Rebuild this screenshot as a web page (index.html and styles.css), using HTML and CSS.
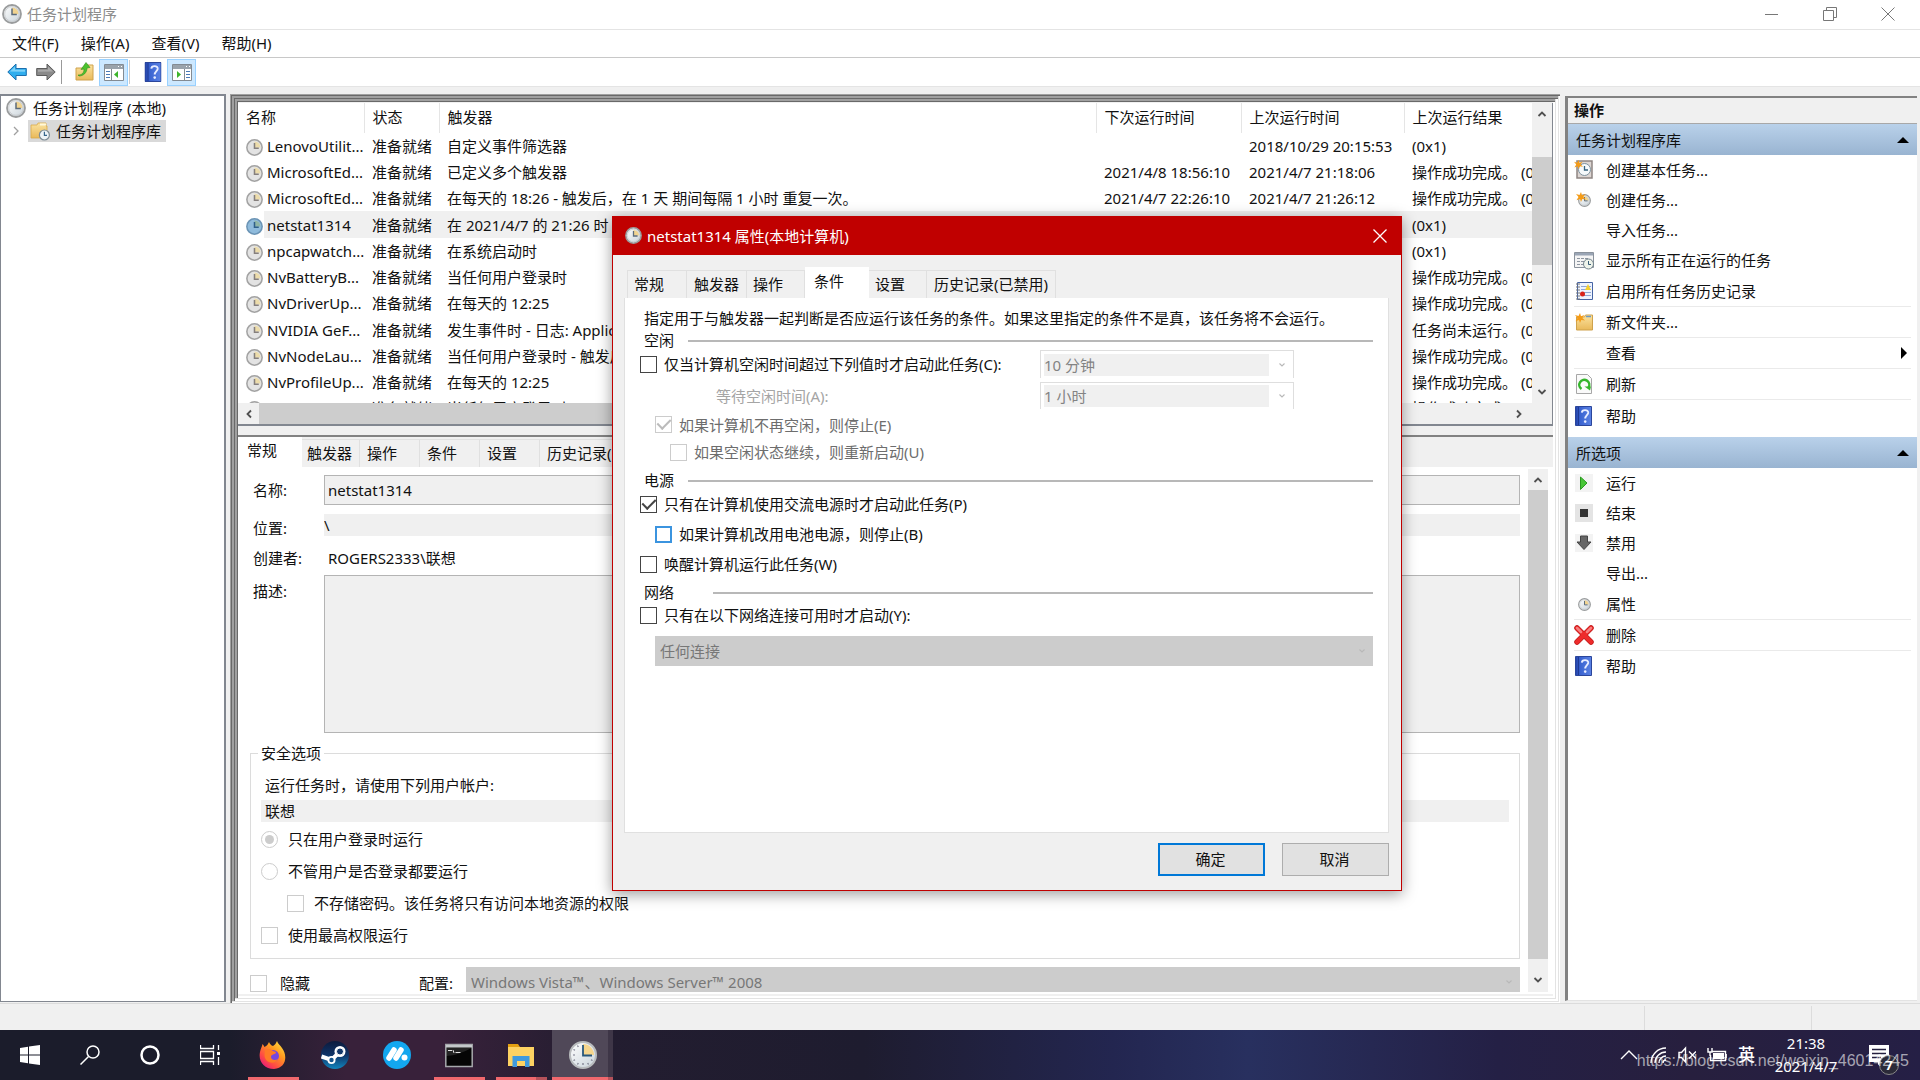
FILE: index.html
```html
<!DOCTYPE html>
<html lang="zh-CN">
<head>
<meta charset="utf-8">
<title>任务计划程序</title>
<link rel="stylesheet" href="styles.css">
</head>
<body>
<svg class="defs" aria-hidden="true">
  <defs>
    <linearGradient id="gFace" x1="0" y1="0" x2="1" y2="1"><stop offset="0" stop-color="#fff"/><stop offset="1" stop-color="#c9d3da"/></linearGradient>
    <linearGradient id="gFolder" x1="0" y1="0" x2="0" y2="1"><stop offset="0" stop-color="#fbe3a0"/><stop offset="1" stop-color="#e9b95a"/></linearGradient>
    <linearGradient id="gBlue" x1="0" y1="0" x2="1" y2="0"><stop offset="0" stop-color="#2342a8"/><stop offset=".3" stop-color="#3a63d0"/><stop offset="1" stop-color="#5b82e4"/></linearGradient>
    <linearGradient id="gFox" x1="1" y1="0" x2="0.2" y2="1"><stop offset="0" stop-color="#fff14a"/><stop offset=".4" stop-color="#ff9a1f"/><stop offset=".75" stop-color="#ff4a45"/><stop offset="1" stop-color="#e5187f"/></linearGradient>
    <linearGradient id="gSteam" x1="0" y1="0" x2="0" y2="1"><stop offset="0" stop-color="#0c1a3c"/><stop offset=".5" stop-color="#0f3468"/><stop offset="1" stop-color="#1285bd"/></linearGradient>
    <symbol id="clock" viewBox="0 0 20 20">
      <circle cx="10" cy="10" r="9" fill="url(#gFace)" stroke="#9a9c9d" stroke-width="1.8"/>
      <path d="M10 10V3.4A6.6 6.6 0 0 1 16.6 10z" fill="#f0d390"/>
      <circle cx="10" cy="10" r="7.3" fill="none" stroke="#c4c7c9" stroke-width=".8"/>
      <path d="M10 4.6V10.6H14.8" fill="none" stroke="#5c6b7a" stroke-width="1.5"/>
    </symbol>
    <symbol id="clock-grey" viewBox="0 0 20 20">
      <circle cx="10" cy="10" r="9" fill="#e3e3e3" stroke="#a3a3a3" stroke-width="1.8"/>
      <path d="M10 10V3A7 7 0 0 1 17 10z" fill="#ecdcab"/>
      <path d="M10 4.6V11H15" fill="none" stroke="#857f7c" stroke-width="1.8"/>
    </symbol>
    <symbol id="clock-blue" viewBox="0 0 20 20">
      <circle cx="10" cy="10" r="9" fill="#8fbbdc" stroke="#6b94b5" stroke-width="1.8"/>
      <path d="M10 10V3A7 7 0 0 1 17 10z" fill="#8fb5a6"/>
      <path d="M10 4.6V11H15" fill="none" stroke="#2f6088" stroke-width="1.8"/>
    </symbol>
    <symbol id="folder-clock" viewBox="0 0 20 20">
      <path d="M1 4h6l1-2h8v3h1v12H1z" fill="url(#gFolder)" stroke="#d9a94a" stroke-width=".8"/>
      <path d="M10 2.5h6v2h-6z" fill="#fff8dc"/>
      <circle cx="14.4" cy="14" r="5" fill="#eef4f8" stroke="#7d8c96" stroke-width="1.2"/>
      <path d="M14.4 10.8V14.4H17" fill="none" stroke="#37668c" stroke-width="1.2"/>
    </symbol>
    <symbol id="help" viewBox="0 0 17 20">
      <path d="M.5.5h16v19H.5z" fill="url(#gBlue)" stroke="#2b469b"/>
      <path d="M3.5 1v18" stroke="#1f3a94"/>
      <path d="M6.8 6.6C7 3.2 13.4 3.200 13.200 6.900 13 9 10.200 9.400 10.200 12.600" fill="none" stroke="#e8edff" stroke-width="1.9"/>
      <circle cx="10.200" cy="15.600" r="1.300" fill="#e8edff"/>
    </symbol>
    <symbol id="star" viewBox="0 0 10 10"><path d="M5 0l1 3.200L9.500 2 7.300 5 10 7.500 6.300 7 5 10 4 7 .5 8.200 2.500 5 0 2l3.500 1z" fill="#f49b17"/></symbol>
    <symbol id="up" viewBox="0 0 10 10"><path d="M1.500 7L5 3.500 8.500 7" fill="none" stroke="#505050" stroke-width="1.8"/></symbol>
    <symbol id="down" viewBox="0 0 10 10"><path d="M1.500 3L5 6.500 8.500 3" fill="none" stroke="#505050" stroke-width="1.8"/></symbol>
    <symbol id="left" viewBox="0 0 10 10"><path d="M7 1.500L3.500 5 7 8.500" fill="none" stroke="#505050" stroke-width="1.8"/></symbol>
    <symbol id="right" viewBox="0 0 10 10"><path d="M3 1.500L6.500 5 3 8.500" fill="none" stroke="#505050" stroke-width="1.8"/></symbol>
    <symbol id="drop" viewBox="0 0 10 10"><path d="M2.500 3.500L5 6 7.500 3.500" fill="none" stroke="#b8b8b8" stroke-width="1.100"/></symbol>
  </defs>
</svg>

<header class="titlebar">
  <svg class="i20"><use href="#clock"/></svg>
  <h1>任务计划程序</h1>
  <div class="winbtns">
    <button aria-label="最小化"><svg viewBox="0 0 14 14"><path d="M0 7.500h13"/></svg></button>
    <button aria-label="还原"><svg viewBox="0 0 14 14"><path d="M.5 3.500h10v10H.5zM3.500 3.500v-3h10v10h-3"/></svg></button>
    <button aria-label="关闭"><svg viewBox="0 0 14 14"><path d="M.5.5l13 13M13.500.5l-13 13"/></svg></button>
  </div>
</header>

<nav class="menubar">
  <button>文件(F)</button><button>操作(A)</button><button>查看(V)</button><button>帮助(H)</button>
</nav>

<div class="toolbar">
  <button aria-label="后退"><svg viewBox="0 0 20 18"><path d="M.8 9L9 1v4.500h10.300v7H9V17z" fill="#30aeee" stroke="#1c6fae"/><path d="M3 8.500L8 3.700v3h10v2z" fill="#7fd2f8"/></svg></button>
  <button aria-label="前进"><svg viewBox="0 0 20 18"><path d="M19.200 9L11 1v4.500H.7v7H11V17z" fill="#8a8a8a" stroke="#5c5c5c"/><path d="M17 8.500L12 3.700v3H2v2z" fill="#aaa"/></svg></button>
  <i class="tsep"></i>
  <button aria-label="上移一级"><svg viewBox="0 0 20 18"><path d="M1 5h7l2-3h8v15H1z" fill="url(#gFolder)" stroke="#cfa24c"/><path d="M3 12c4 0 6-2 6-6L6 6.500 11-.5l4 5-3 .5c0 5-4 8-8 8z" fill="#4cc22e" stroke="#2f8e1c" stroke-width=".6"/></svg></button>
  <button class="on" aria-label="显示控制台树"><svg viewBox="0 0 20 18"><path d="M.5 1.500h19v16H.5z" fill="#fff" stroke="#838b93"/><path d="M1 2h18v4H1z" fill="#9aa3ab"/><path d="M14 3.500h1M17 3.500h1" stroke="#fff"/><path d="M7.500 6v11" stroke="#838b93"/><path d="M2 8.500h4M2 11.500h4M2 14.500h4" stroke="#4a7ab8"/><path d="M14 8v7l-4-3.500z" fill="#3db52b"/></svg></button>
  <i class="tsep light"></i>
  <button aria-label="帮助"><svg viewBox="0 0 17 20"><use href="#help"/></svg></button>
  <button class="on" aria-label="显示操作窗格"><svg viewBox="0 0 20 18"><path d="M.5 1.500h19v16H.5z" fill="#fff" stroke="#838b93"/><path d="M1 2h18v4H1z" fill="#9aa3ab"/><path d="M14 3.500h1M17 3.500h1" stroke="#fff"/><path d="M12.500 6v11" stroke="#838b93"/><path d="M14 8.500h4M14 11.500h4M14 14.500h4" stroke="#4a7ab8"/><path d="M5 8v7l4-3.500z" fill="#3db52b"/></svg></button>
</div>

<main class="workspace">
  <aside class="tree">
    <div class="node"><svg class="i20"><use href="#clock"/></svg><span>任务计划程序 (本地)</span></div>
    <div class="node child"><svg class="twisty" viewBox="0 0 10 10"><path d="M3 1l4 4-4 4" fill="none" stroke="#a0a0a0" stroke-width="1.300"/></svg><span class="picked"><svg class="i20"><use href="#folder-clock"/></svg>任务计划程序库</span></div>
  </aside>

  <section class="center">
    <div class="listbox">
      <div class="listbody">
        <div class="tablewrap">
          <table>
            <colgroup><col class="c1"><col class="c2"><col><col class="c4"><col class="c5"><col class="c6"></colgroup>
            <thead><tr><th>名称</th><th>状态</th><th>触发器</th><th>下次运行时间</th><th>上次运行时间</th><th>上次运行结果</th></tr></thead>
            <tbody>
              <tr><td><svg class="i17"><use href="#clock-grey"/></svg>LenovoUtilit...</td><td>准备就绪</td><td>自定义事件筛选器</td><td></td><td>2018/10/29 20:15:53</td><td>(0x1)</td></tr>
              <tr><td><svg class="i17"><use href="#clock-grey"/></svg>MicrosoftEd...</td><td>准备就绪</td><td>已定义多个触发器</td><td>2021/4/8 18:56:10</td><td>2021/4/7 21:18:06</td><td>操作成功完成。 (0x0)</td></tr>
              <tr><td><svg class="i17"><use href="#clock-grey"/></svg>MicrosoftEd...</td><td>准备就绪</td><td>在每天的 18:26 - 触发后，在 1 天 期间每隔 1 小时 重复一次。</td><td>2021/4/7 22:26:10</td><td>2021/4/7 21:26:12</td><td>操作成功完成。 (0x0)</td></tr>
              <tr class="sel"><td><svg class="i17"><use href="#clock-blue"/></svg>netstat1314</td><td>准备就绪</td><td>在 2021/4/7 的 21:26 时</td><td></td><td></td><td>(0x1)</td></tr>
              <tr><td><svg class="i17"><use href="#clock-grey"/></svg>npcapwatch...</td><td>准备就绪</td><td>在系统启动时</td><td></td><td></td><td>(0x1)</td></tr>
              <tr><td><svg class="i17"><use href="#clock-grey"/></svg>NvBatteryB...</td><td>准备就绪</td><td>当任何用户登录时</td><td></td><td></td><td>操作成功完成。 (0x0)</td></tr>
              <tr><td><svg class="i17"><use href="#clock-grey"/></svg>NvDriverUp...</td><td>准备就绪</td><td>在每天的 12:25</td><td></td><td></td><td>操作成功完成。 (0x0)</td></tr>
              <tr><td><svg class="i17"><use href="#clock-grey"/></svg>NVIDIA GeF...</td><td>准备就绪</td><td>发生事件时 - 日志: Application</td><td></td><td></td><td>任务尚未运行。 (0x0)</td></tr>
              <tr><td><svg class="i17"><use href="#clock-grey"/></svg>NvNodeLau...</td><td>准备就绪</td><td>当任何用户登录时 - 触发后</td><td></td><td></td><td>操作成功完成。 (0x0)</td></tr>
              <tr><td><svg class="i17"><use href="#clock-grey"/></svg>NvProfileUp...</td><td>准备就绪</td><td>在每天的 12:25</td><td></td><td></td><td>操作成功完成。 (0x0)</td></tr>
              <tr><td><svg class="i17"><use href="#clock-grey"/></svg>NvProfileUp...</td><td>准备就绪</td><td>当任何用户登录时</td><td></td><td></td><td>操作成功完成。 (0x0)</td></tr>
            </tbody>
          </table>
        </div>
        <div class="vscroll"><svg><use href="#up"/></svg><i class="thumb upper"></i><svg><use href="#down"/></svg></div>
      </div>
      <div class="hscroll"><svg><use href="#left"/></svg><i class="thumb"></i><svg class="end"><use href="#right"/></svg></div>
    </div>

    <div class="details">
      <div class="tabs" role="tablist">
        <button class="tab first active">常规</button><button class="tab near">触发器</button><button class="tab">操作</button><button class="tab">条件</button><button class="tab">设置</button><button class="tab wide">历史记录(已禁用)</button>
      </div>
      <div class="detailbody">
        <form class="general">
          <div class="fields">
            <label class="mid" for="nm">名称:</label><input id="nm" class="box" value="netstat1314" readonly>
            <label for="loc">位置:</label><input id="loc" class="flat" value="\" readonly>
            <span>创建者:</span><span class="author">ROGERS2333\联想</span>
            <label class="top" for="ds">描述:</label><textarea id="ds" class="box" readonly></textarea>
          </div>
          <fieldset>
            <legend>安全选项</legend>
            <p>运行任务时，请使用下列用户帐户:</p>
            <div class="account">联想</div>
            <label class="opt"><input type="radio" name="r" checked disabled>只在用户登录时运行</label>
            <label class="opt"><input type="radio" name="r" disabled>不管用户是否登录都要运行</label>
            <label class="opt sub"><input type="checkbox" disabled>不存储密码。该任务将只有访问本地资源的权限</label>
            <label class="opt"><input type="checkbox" disabled>使用最高权限运行</label>
          </fieldset>
          <div class="config">
            <label class="opt"><input type="checkbox" disabled>隐藏</label>
            <label for="cfg">配置:</label>
            <span class="combo dark"><select id="cfg" disabled><option>Windows Vista™、Windows Server™ 2008</option></select><svg><use href="#drop"/></svg></span>
          </div>
        </form>
        <div class="vscroll"><svg><use href="#up"/></svg><i class="thumb lower"></i><svg><use href="#down"/></svg></div>
      </div>
    </div>
  </section>

  <aside class="actions">
    <h2>操作</h2>
    <h3>任务计划程序库<svg viewBox="0 0 12 6"><path d="M0 6l6-6 6 6z"/></svg></h3>
    <ul>
      <li><svg viewBox="0 0 20 20"><path d="M3 1h15v17H3z" fill="#ddd6d3" stroke="#8e8582" stroke-width="1.500"/><circle cx="10.500" cy="9.500" r="6" fill="#f5f9fb" stroke="#7e929f"/><path d="M10.500 6v4H14" fill="none" stroke="#35617e" stroke-width="1.300"/><use href="#star" width="9" height="9"/></svg>创建基本任务...</li>
      <li><svg viewBox="0 0 20 20"><use href="#clock" x="4" y="4" width="13" height="13"/><use href="#star" x="2" y="2" width="10" height="10"/></svg>创建任务...</li>
      <li><svg></svg>导入任务...</li>
      <li><svg viewBox="0 0 20 20"><path d="M.5 2.500h19v15H.5z" fill="#f4f4f4" stroke="#8a929c"/><path d="M1 3h18v2.500H1z" fill="#9aa5b5"/><path d="M3 8.500h3M7 8.500h3M11 8.500h3M3 11.500h3M7 11.500h3M3 14.500h3M7 14.500h2" stroke="#8d95a0"/><circle cx="14.500" cy="14" r="5" fill="#eef3ea" stroke="#71828c"/><path d="M14.500 11v3.500H17" fill="none" stroke="#375d78"/></svg>显示所有正在运行的任务</li>
      <li class="line"><svg viewBox="0 0 20 20"><path d="M3.500 1.500h15v17h-15z" fill="#eef4ff" stroke="#4664a4"/><path d="M2 3h4M2 6h4M2 9h4M2 12h4M2 15h4M2 18h4" stroke="#777"/><path d="M7 5.500h10M7 8.500h10M7 11.500h10M7 14.500h10" stroke="#8fa6d4"/><path d="M11 9l3-6 3 6z" fill="#f5cf2c"/><circle cx="8.500" cy="13" r="2.500" fill="#d8241c"/></svg>启用所有任务历史记录</li>
      <li class="line"><svg viewBox="0 0 20 20"><path d="M2.500 5h8l1-2h7v15h-16z" fill="url(#gFolder)" stroke="#cfa24c"/><path d="M12 4.500h5" stroke="#6d9ac4" stroke-width="1.500"/><use href="#star" x="1" y="1" width="10" height="10"/></svg>新文件夹...</li>
      <li class="line"><svg></svg>查看<svg class="more" viewBox="0 0 6 12"><path d="M0 0l6 6-6 6z"/></svg></li>
      <li class="line"><svg viewBox="0 0 20 20"><path d="M2.500.5h11l4 4v15h-15z" fill="#fafafa" stroke="#a7a7a7"/><path d="M7.500 15a5 5 0 1 1 7-1.500" fill="none" stroke="#35b52c" stroke-width="2.500"/><path d="M10.500 12.500h6.500l-1 4z" fill="#35b52c"/></svg>刷新</li>
      <li class="last"><svg viewBox="0 0 20 20"><use href="#help" x="1" width="17" height="20"/></svg>帮助</li>
    </ul>
    <h3>所选项<svg viewBox="0 0 12 6"><path d="M0 6l6-6 6 6z"/></svg></h3>
    <ul>
      <li><svg viewBox="0 0 20 20"><path d="M1 1h18v18H1z" fill="#f3f3f3"/><path d="M6.500 4l6.500 6-6.500 6.500z" fill="#48c637" stroke="#2a9a20"/></svg>运行</li>
      <li><svg viewBox="0 0 20 20"><path d="M1 1h18v18H1z" fill="#e4e4e4"/><path d="M6 6h8v8H6z" fill="#333"/></svg>结束</li>
      <li><svg viewBox="0 0 20 20"><path d="M1 1h18v18H1z" fill="#f3f3f3"/><path d="M6.500 3h7v6h3.500l-7 7.500L3 9h3.500z" fill="#666" stroke="#444"/></svg>禁用</li>
      <li><svg></svg>导出...</li>
      <li class="line"><svg viewBox="0 0 20 20"><use href="#clock" x="4" y="4" width="13" height="13"/></svg>属性</li>
      <li class="line"><svg viewBox="0 0 20 20"><path d="M3 3l14 14M17 3L3 17" stroke="#c21a1a" stroke-width="5.500" stroke-linecap="round"/><path d="M3 3l14 14M17 3L3 17" stroke="#ee2b2b" stroke-width="4" stroke-linecap="round"/><path d="M3 3l4 4M17 3l-4 4" stroke="#f78080" stroke-width="2.500" stroke-linecap="round"/></svg>删除</li>
      <li><svg viewBox="0 0 20 20"><use href="#help" x="1" width="17" height="20"/></svg>帮助</li>
    </ul>
  </aside>
</main>

<div class="statusbar"><i></i><i class="s2"></i><i class="s3"></i></div>

<footer class="taskbar">
  <div class="apps">
    <button class="sys" aria-label="开始"><svg viewBox="0 0 20 20"><path d="M0 3l8-1.200v7.700H0zM9 1.600L20 0v9.500H9zM0 10.500h8v7.700L0 17zM9 10.500h11V20L9 18.400z" fill="#fff"/></svg></button>
    <button class="sys" aria-label="搜索"><svg viewBox="0 0 20 20"><g fill="none" stroke="#fff" stroke-width="1.500"><circle cx="13" cy="7" r="6"/><path d="M8.500 11.500L.5 19.500"/></g></svg></button>
    <button class="sys" aria-label="语音助手"><svg viewBox="0 0 20 20"><circle cx="10" cy="10" r="8.500" fill="none" stroke="#fff" stroke-width="2.500"/></svg></button>
    <button class="sys" aria-label="任务视图"><svg viewBox="0 0 20 20"><path d="M.5 0v3.500h13V0M.5 20v-3.500h13V20M.5 6.500h13v7H.5zM18.500 0v5M18.500 12v8" fill="none" stroke="#fff" stroke-width="1.300"/><path d="M17 7h3v3h-3z" fill="#fff"/></svg></button>
    <button class="app run" aria-label="Firefox"><svg viewBox="0 0 28 28"><path d="M18 0c1 3 3 4 5 7 6 8 4 20-8 21C5 28-1 20 1 11c.4-3 2-5 2.500-8 1 1 1.500 2 2 3C8 5 9 3 10 1c1 2 2 3.500 4 4 2-1 3-3 4-5z" fill="url(#gFox)"/><circle cx="14" cy="15" r="6" fill="#7446e0"/><path d="M6 9c3-2 6-1 8 1 2 .5 3 1 3 2-2 2-5 1-5 4s4 4 7 2c-2 5-11 5-13-1-1-3 0-5 0-8z" fill="#ff7a26"/></svg></button>
    <button class="app" aria-label="Steam"><svg viewBox="0 0 28 28"><circle cx="14" cy="14" r="14" fill="url(#gSteam)"/><path d="M.5 15.500l10 3.500 8-8" fill="none" stroke="#fff" stroke-width="4"/><circle cx="19" cy="10.500" r="5.500" fill="#fff"/><circle cx="19" cy="10.500" r="3.500" fill="#12376a" stroke="#fff" stroke-width="1"/><circle cx="10.500" cy="19" r="4" fill="#fff"/><circle cx="10.500" cy="19" r="2.200" fill="#14548c"/></svg></button>
    <button class="app" aria-label="M"><svg viewBox="0 0 28 28"><circle cx="14" cy="14" r="14" fill="#13a7ef"/><path d="M6 17l5-8M13 17l5-8" stroke="#fff" stroke-width="5.500" stroke-linecap="round"/><circle cx="21.500" cy="16.500" r="3" fill="#fff"/></svg></button>
    <button class="app run" aria-label="命令提示符"><svg viewBox="0 0 28 28"><path d="M.8 3.500h26.400v22H.8z" fill="#050505" stroke="#a6a9ac" stroke-width="1.500"/><path d="M1 4h26v2.500H1z" fill="#c4c8ca"/><path d="M3 9.500h4M8 9l1 3M10.500 11.500h5" stroke="#ddd"/><path d="M1.500 15Q14 14 26.500 7v-.5h-25z" fill="#fff" opacity=".12"/></svg></button>
    <button class="app run multi" aria-label="文件资源管理器"><svg viewBox="0 0 28 28"><path d="M1 3h10l2 3v4H1z" fill="#e3a012"/><path d="M1 6h26v19H1z" fill="#fdd262"/><path d="M5.500 26V15h17v11h-4.500v-6h-8v6z" fill="#3f9add"/></svg></button>
    <button class="app run current" aria-label="任务计划程序"><svg viewBox="0 0 28 28"><circle cx="14" cy="14" r="13" fill="url(#gFace)" stroke="#b8bbbd" stroke-width="2"/><path d="M14 14V3a11 11 0 0 1 11 11z" fill="#f5d58c"/><path d="M14 4v10.500h9" fill="none" stroke="#28587c" stroke-width="1.800"/><g fill="none" stroke="#778" stroke-width="1.200"><path d="M14 22v2M4 14h2M8.500 4.500l.8 1.500M4.500 8.500L6 9.300M4.500 19.500L6 18.700M8.500 23.500l.8-1.500M19.500 23.500l-.8-1.500M23.500 19.500l-1.500-.8"/></g></svg></button>
  </div>
  <div class="tray">
    <svg viewBox="0 0 18 18"><path d="M1 13l8-8 8 8"/></svg>
    <svg viewBox="0 0 18 18"><path d="M2 17A15 15 0 0 1 17 2M6 17A11 11 0 0 1 17 6M10 17a7 7 0 0 1 7-7M14 17a3 3 0 0 1 3-3"/></svg>
    <svg viewBox="0 0 18 18"><path d="M1 6.500h2.500L7.500 2v14l-4-4.500H1zM11 5.500l7 7M18 5.500l-7 7"/></svg>
    <svg class="bat" viewBox="0 0 20 16"><path d="M5 4.500h13.500v9H3.500V8M1 1v4h4V1M3 5v4M20 7v4"/><path class="fill" d="M6 6h11v6H6z"/></svg>
    <span class="ime">英</span>
    <div class="clock"><span>21:38</span><span>2021/4/7</span></div>
    <div class="notify"><svg viewBox="0 0 20 20"><path class="fill" d="M0 0h20v17H14l-5 3v-3H0z"/><path d="M3 4.500h14M3 8.500h14M3 12.500h9" class="ink"/></svg><b>7</b></div>
  </div>
  <span class="watermark">https://blog.csdn.net/weixin_46014245</span>
</footer>

<section class="dialog" role="dialog" aria-label="netstat1314 属性">
  <header><svg class="i17"><use href="#clock"/></svg><span>netstat1314 属性(本地计算机)</span><button aria-label="关闭"><svg viewBox="0 0 14 14"><path d="M.5.5l13 13M13.500.5l-13 13"/></svg></button></header>
  <div class="dbody">
    <div class="tabs" role="tablist">
      <button class="tab">常规</button><button class="tab">触发器</button><button class="tab near">操作</button><button class="tab active">条件</button><button class="tab near">设置</button><button class="tab wide">历史记录(已禁用)</button>
    </div>
    <form class="page">
      <p>指定用于与触发器一起判断是否应运行该任务的条件。如果这里指定的条件不是真，该任务将不会运行。</p>
      <h4>空闲<i></i></h4>
      <div class="row"><label class="opt"><input type="checkbox">仅当计算机空闲时间超过下列值时才启动此任务(C):</label><span class="combo"><select aria-label="空闲时间" disabled><option>10 分钟</option></select><svg><use href="#drop"/></svg></span></div>
      <div class="row tall"><label class="wait" for="wt">等待空闲时间(A):</label><span class="combo"><select id="wt" disabled><option>1 小时</option></select><svg><use href="#drop"/></svg></span></div>
      <label class="opt tight l1 off"><input type="checkbox" checked disabled>如果计算机不再空闲，则停止(E)</label>
      <label class="opt l2 off"><input type="checkbox" disabled>如果空闲状态继续，则重新启动(U)</label>
      <h4>电源<i></i></h4>
      <label class="opt"><input type="checkbox" checked>只有在计算机使用交流电源时才启动此任务(P)</label>
      <label class="opt l1"><input type="checkbox" class="hot">如果计算机改用电池电源，则停止(B)</label>
      <label class="opt"><input type="checkbox">唤醒计算机运行此任务(W)</label>
      <h4 class="net">网络<i></i></h4>
      <label class="opt short"><input type="checkbox">只有在以下网络连接可用时才启动(Y):</label>
      <span class="combo dark"><select aria-label="网络连接" disabled><option>任何连接</option></select><svg><use href="#drop"/></svg></span>
    </form>
    <div class="buttons"><button class="default">确定</button><button>取消</button></div>
  </div>
</section>
</body>
</html>
```

FILE: styles.css
```css
* { box-sizing: border-box; }
body {
  margin: 0;
  height: 100vh;
  display: flex;
  flex-direction: column;
  overflow: hidden;
  background: #f0f0f0;
  color: #111;
  font: 15px/22px "Noto Sans", "Noto Sans CJK SC", sans-serif;
}
h1, h2, h3, h4, p, ul { margin: 0; padding: 0; font-size: 15px; font-weight: 400; }
button, input, select, textarea { font: inherit; color: inherit; margin: 0; padding: 0; border: 0; background: none; }
svg { flex: none; display: block; }
.defs { width: 0; height: 0; position: absolute; }
.i20 { width: 20px; height: 20px; }
.i17 { width: 17px; height: 17px; }

.titlebar { display: flex; align-items: center; height: 29px; padding: 0 0 2px 2px; gap: 5px; background: #fff; color: #8c8c8c; flex: none; }
.winbtns { margin-left: auto; display: flex; }
.winbtns button { width: 58px; display: flex; justify-content: center; }
.winbtns svg { width: 14px; height: 14px; fill: none; stroke: #777; }
.winbtns button:last-child { margin-right: 3px; }
.menubar { display: flex; align-items: center; height: 29px; padding: 0 0 2px 12px; gap: 22px; background: #fff; border-top: 1px solid #e4e4e4; border-bottom: 1px solid #c8c8c8; flex: none; }
.toolbar { display: flex; align-items: center; height: 29px; padding-left: 2px; background: #fff; border-bottom: 1px solid #e4e4e4; flex: none; }
.toolbar button { width: 29px; height: 27px; display: flex; align-items: center; justify-content: center; }
.toolbar svg { width: 20px; height: 20px; }
.toolbar .on { background: #cce8ff; border: 1px solid #99d1ff; }
.tsep { width: 1px; height: 24px; background: #999; margin: 0 8px 0 1px; }
.tsep.light { background: #ccc; }

.workspace { flex: 1; min-height: 0; display: flex; padding: 7px 3px 0 0; }
.tree { width: 226px; flex: none; background: #fff; border: 2px solid #828790; border-left-width: 1px; border-bottom-width: 1px; padding: 0 5px; margin-bottom: 1px; }
.node { display: flex; align-items: center; gap: 7px; height: 23px; }
.twisty { width: 10px; height: 10px; margin-left: 5px; }
.node.child { gap: 7px; }
.picked { display: flex; gap: 6px; align-items: center; background: #d9d9d9; padding: 0 5px 0 2px; }

.center {
  flex: 1; min-width: 0; display: flex; flex-direction: column; margin-left: 4px; padding: 9px 7px 9px 8px; background: #f0f0f0;
  box-shadow: inset 1px 1px #a0a0a0, inset 2px 2px #696969, inset -1px -1px #fff, inset -2px -2px #e3e3e3,
    inset 4px 4px #a0a0a0, inset 5px 5px #696969, inset -4px -4px #fff, inset -5px -5px #e3e3e3,
    inset 7px 7px #a0a0a0, inset 8px 8px #696969, inset -7px -7px #fff;
}
.listbox { height: 323px; flex: none; display: flex; flex-direction: column; background: #fff; border-right: 1px solid #828790; border-bottom: 2px solid #828790; }
.listbody { flex: 1; min-height: 0; display: flex; }
.tablewrap { flex: 1; min-width: 0; overflow: hidden; }
table { width: 100%; table-layout: fixed; border-collapse: collapse; }
.c1 { width: 126px; } .c2 { width: 75px; } .c4 { width: 145px; } .c5 { width: 163px; } .c6 { width: 128px; }
th { height: 30px; text-align: left; font-weight: 400; padding: 0 0 2px 8px; border-right: 1px solid #e5e5e5; }
th:last-child { border: 0; }
td { height: 26px; padding: 0 0 0 8px; white-space: nowrap; overflow: hidden; }
tr:nth-child(4n) td { height: 27px; }
td .i17 { display: inline-block; vertical-align: -4px; margin-right: 4px; }
.sel td { background: #f0f0f0; }
.sel td:first-child { background: linear-gradient(90deg, #fff 26px, #f0f0f0 26px); }
.vscroll { width: 20px; flex: none; background: #f0f0f0; display: flex; flex-direction: column; align-items: center; justify-content: space-between; padding: 6px 0; }
.vscroll svg, .hscroll svg { width: 10px; height: 10px; }
.thumb { background: #cdcdcd; display: block; }
.vscroll .thumb { width: 20px; }
.thumb.upper { height: 108px; margin-bottom: 85px; }
.thumb.lower { flex: 1; margin: 5px 0 16px; }
.hscroll { height: 21px; flex: none; background: #f0f0f0; display: flex; align-items: center; padding: 0 28px 0 6px; gap: 5px; }
.hscroll .thumb { height: 21px; width: 1080px; }
.hscroll .end { margin-left: auto; }

.details { flex: 1; min-height: 0; margin-top: 9px; border-top: 2px solid #828282; background: #fff; display: flex; flex-direction: column; }
.tabs { display: flex; align-items: flex-end; background: #f0f0f0; flex: none; }
.tab { width: 60px; height: 28px; text-align: left; padding: 0 0 2px 7px; border: 1px solid #e0e0e0; border-left: 0; border-bottom: 0; white-space: nowrap; }
.tab.wide { width: 129px; }
.tab.active { background: #fff; border-color: #fff; padding-left: 9px; padding-bottom: 5px; }
.details .tab.first { width: 64px; height: 30px; }
.details .near { width: 58px; padding-left: 5px; }
.detailbody { flex: 1; min-height: 0; display: flex; padding: 2px 5px 2px 0; }
.detailbody .vscroll { padding: 6px 0 7px; }
.general { flex: 1; min-width: 0; overflow: hidden; padding: 6px 8px 0 12px; }
.fields { display: grid; grid-template-columns: 71px 1fr; grid-template-rows: 30px 22px 21px 158px; row-gap: 9px; padding-left: 3px; align-items: end; }
.fields > label, .fields > span { height: 22px; line-height: 28px; }
.fields > .mid { align-self: center; line-height: 22px; }
.fields > .top { align-self: start; margin-top: 4px; line-height: 24px; }
.box { width: 100%; height: 100%; background: #f0f0f0; border: 1px solid #b4b4b4; padding: 0 3px; resize: none; display: block; }
.flat { width: 100%; height: 22px; background: #f0f0f0; }
.author { padding-left: 4px; }
fieldset { margin: 9px 0 0; padding: 10px 10px 7px; border: 1px solid #dcdcdc; min-width: 0; }
legend { padding: 0 3px; height: 22px; margin-left: -3px; }
fieldset p { padding-left: 4px; }
.account { background: #f0f0f0; margin: 4px 0 1px; padding-left: 4px; height: 22px; }
.opt { display: flex; align-items: center; gap: 7px; height: 30px; }
fieldset .opt { height: 32px; gap: 10px; }
.opt.sub { padding-left: 26px; }
input[type="checkbox"], input[type="radio"] { appearance: none; flex: none; width: 17px; height: 17px; border: 1px solid #444; background: #fff; display: grid; place-items: center; }
input[type="checkbox"]:checked::after { content: ""; width: 6px; height: 11px; border: solid #444; border-width: 0 2px 2px 0; transform: translateY(-2px) rotate(45deg); }
input[type="radio"] { border-radius: 50%; }
input[type="radio"]:checked::after { content: ""; width: 9px; height: 9px; border-radius: 50%; background: #ccc; }
input[type="checkbox"]:disabled, input[type="radio"]:disabled { border-color: #ccc; }
input[type="checkbox"]:disabled::after { border-color: #bbb; }
input.hot { border: 2px solid #3b94df; }
.config { display: flex; margin-top: 8px; height: 32px; }
.config > label { height: 32px; line-height: 32px; width: 47px; }
.config > .opt { gap: 13px; width: 169px; }
.combo { display: flex; align-items: center; border: 1px solid #dedede; border-bottom: 0; background: #fff; height: 28px; padding: 0 6px 0 3px; color: #838383; }
.combo select { appearance: none; flex: 1; height: 22px; background: #f0f0f0; opacity: 1; margin-right: 8px; }
.combo svg { width: 10px; height: 10px; }
.combo.dark { background: #ccc; border: 0; height: 30px; padding-left: 5px; color: #777; }
.combo.dark select { background: #ccc; }
.config .combo { flex: 1; }

.actions { width: 352px; flex: none; margin: 2px 0 2px 5px; background: #fff; border: 2px solid #828282; border-left-width: 3px; border-right: 0; border-bottom: 1px solid #e3e3e3; }
.actions h2 { height: 26px; padding: 1px 0 0 6px; background: #f0f0f0; font-weight: 700; border-bottom: 1px solid #a8a8a8; }
.actions h3 { display: flex; align-items: center; justify-content: space-between; height: 31px; padding: 0 8px; background: linear-gradient(#b9d1ea, #99b4d1); }
.actions h3 svg { width: 12px; height: 6px; }
.actions ul { list-style: none; padding: 0 6px; }
.actions li { display: flex; align-items: center; gap: 12px; height: 30px; }
.actions li.line { height: 31px; border-bottom: 1px solid #eaeaea; }
.actions li.line:nth-child(5) { height: 32px; }
.actions li.last { height: 37px; padding-bottom: 5px; }
.actions li svg { width: 20px; height: 20px; }
.actions li .more { width: 6px; height: 12px; margin: 0 4px 0 auto; }

.statusbar { height: 27px; flex: none; display: flex; border-top: 1px solid #dcdcdc; padding-top: 2px; }
.statusbar i { flex: 1; border-right: 1px solid #dcdcdc; }
.statusbar .s2 { flex: none; width: 167px; }
.statusbar .s3 { flex: none; width: 108px; border: 0; }

.taskbar { position: relative; height: 50px; flex: none; display: flex; justify-content: space-between; color: #fff; background: linear-gradient(90deg, #1b1c2b 0, #1b1c2b 12%, #38213a 18%, #38213a 23%, #231d30 31%, #1e1c2f 45%, #232650 58%, #28305f 65%, #242045 78%, #271f3e 88%, #251f45 100%); }
.apps { display: flex; }
.apps button { display: flex; align-items: center; justify-content: center; height: 50px; }
.apps .sys { width: 60px; }
.apps .sys svg { width: 20px; height: 20px; }
.apps .sys:nth-child(4) { margin-right: 2px; }
.apps .app { width: 62px; }
.apps .app svg { width: 28px; height: 28px; }
.apps .run { background: linear-gradient(#f0686d, #f0686d) 50% 100% / 51px 3px no-repeat; }
.apps .multi { background: linear-gradient(90deg, #f0686d 40px, #b5525a 40px) 50% 100% / 51px 3px no-repeat; }
.apps .current { background: linear-gradient(90deg, #f0686d 56px, #b5525a 56px) 0 100% / 61px 3px no-repeat, linear-gradient(90deg, #504858 56px, #3e3647 56px 61px, transparent 61px); }
.tray { display: flex; align-items: center; gap: 11px; padding-right: 31px; }
.tray svg { width: 18px; height: 18px; fill: none; stroke: #fff; stroke-width: 1.4; }
.tray .fill { fill: #fff; stroke: none; }
.tray .ink { stroke: #25203f; }
.tray .bat { width: 20px; height: 16px; }
.ime { font-size: 17px; font-weight: 500; }
.clock { display: flex; flex-direction: column; align-items: center; width: 80px; line-height: 23px; }
.notify { position: relative; margin-left: 12px; }
.notify svg { width: 20px; height: 20px; }
.notify b { position: absolute; left: 10px; top: 10px; width: 20px; height: 20px; line-height: 18px; border: 1px solid #888; border-radius: 50%; background: #2b2a38; text-align: center; font-size: 13px; }
.watermark { position: absolute; right: 11px; bottom: 8px; font: 16px/22px "Liberation Sans", sans-serif; color: rgba(255, 255, 255, .6); }

.dialog { position: absolute; left: 612px; top: 216px; width: 790px; height: 675px; display: flex; flex-direction: column; border: 1px solid #c00000; background: #f0f0f0; box-shadow: 0 3px 14px rgba(0, 0, 0, .4); }
.dialog > header { display: flex; align-items: center; gap: 5px; height: 38px; padding: 0 14px 1px 12px; background: #c00000; color: #fff; flex: none; }
.dialog > header button { margin-left: auto; }
.dialog > header button svg { width: 14px; height: 14px; fill: none; stroke: #fff; stroke-width: 1.3; }
.dbody { flex: 1; display: flex; flex-direction: column; padding: 12px 12px 14px 11px; }
.dialog .tabs { padding-left: 3px; }
.dialog .tab.active { width: 64px; height: 31px; }
.dialog .tab:first-child { border-left: 1px solid #e0e0e0; padding-left: 6px; }
.dialog .near { width: 58px; padding-left: 6px; }
.page { flex: 1; background: #fff; border: 1px solid #e0e0e0; border-top: 0; padding: 9px 15px 0; }
.page p { padding-left: 4px; height: 20px; line-height: 23px; white-space: nowrap; }
h4 { display: flex; align-items: center; gap: 14px; height: 22px; padding: 4px 0 0 4px; }
h4 i { flex: 1; height: 2px; margin-top: 2px; background: #b8b8b8; }
h4.net { gap: 39px; }
.row { display: flex; align-items: center; justify-content: space-between; height: 30px; }
.row.tall { height: 33px; }
.row .combo { width: 254px; margin-right: 79px; }
.row.tall .combo { height: 27px; }
.wait { padding-left: 76px; color: #a5a5a5; }
.l1 { padding-left: 15px; }
.l2 { padding-left: 30px; }
.off { color: #6d6d6d; }
.short { height: 28px; }
.tight { height: 25px; }
.page > .combo { margin: 7px 0 0 15px; }
.buttons { display: flex; justify-content: flex-end; gap: 17px; padding-top: 10px; }
.buttons button { width: 107px; height: 33px; padding: 0 2px 2px 0; background: #e1e1e1; border: 1px solid #adadad; }
.buttons .default { border: 2px solid #0078d7; }
```
